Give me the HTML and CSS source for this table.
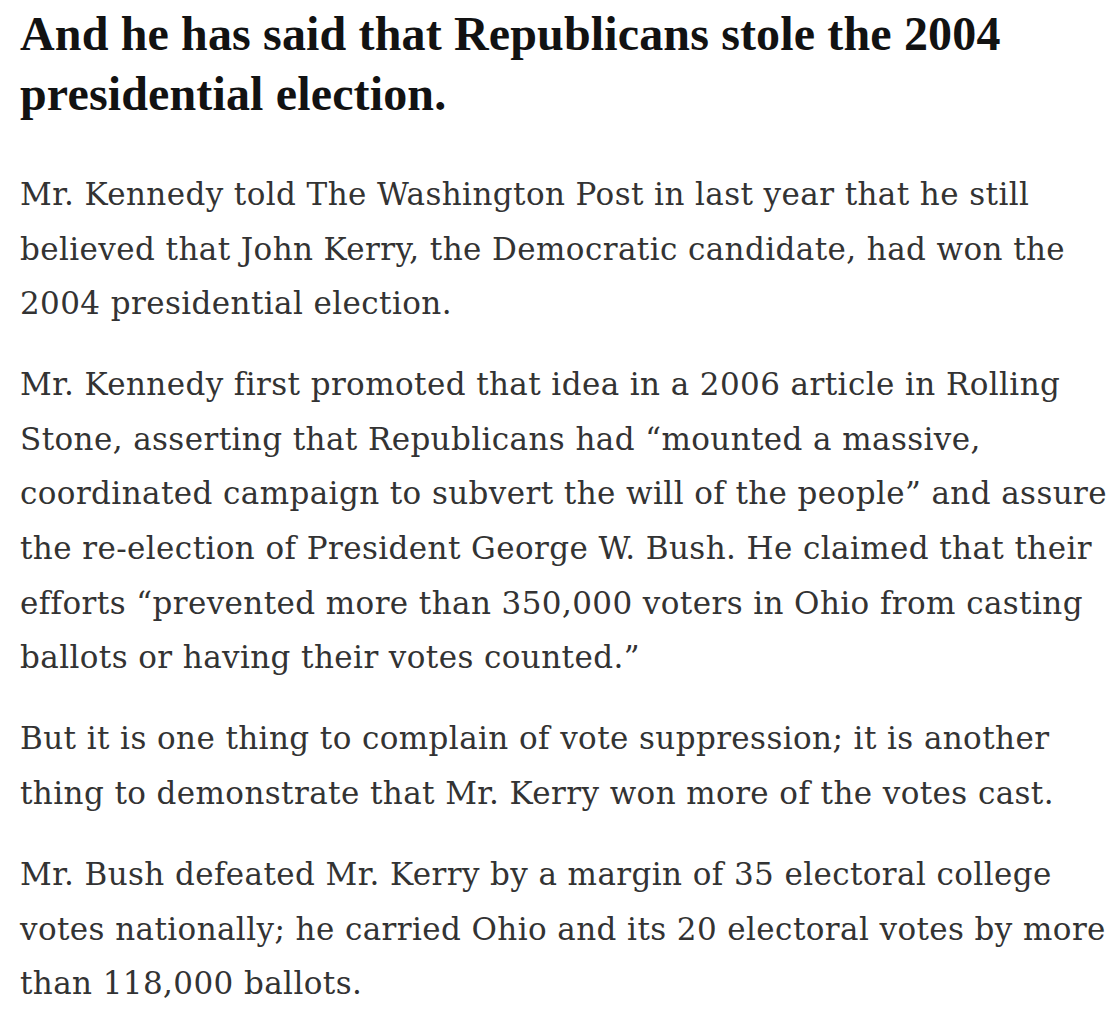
FILE: index.html
```html
<!DOCTYPE html>
<html lang="en">
<head>
<meta charset="utf-8">
<title>Article</title>
<link rel="stylesheet" href="styles.css">
</head>
<body>
<article class="story">
  <h2 class="story-heading">And he has said that Republicans stole the 2004<br>presidential election.</h2>
  <p class="story-text">Mr. Kennedy told The Washington Post in last year that he still<br>believed that John Kerry, the Democratic candidate, had won the<br>2004 presidential election.</p>
  <p class="story-text">Mr. Kennedy first promoted that idea in a 2006 article in Rolling<br>Stone, asserting that Republicans had “mounted a massive,<br>coordinated campaign to subvert the will of the people” and assure<br>the re-election of President George W. Bush. He claimed that their<br>efforts “prevented more than 350,000 voters in Ohio from casting<br>ballots or having their votes counted.”</p>
  <p class="story-text">But it is one thing to complain of vote suppression; it is another<br>thing to demonstrate that Mr. Kerry won more of the votes cast.</p>
  <p class="story-text">Mr. Bush defeated Mr. Kerry by a margin of 35 electoral college<br>votes nationally; he carried Ohio and its 20 electoral votes by more<br>than 118,000 ballots.</p>
</article>
</body>
</html>
```
FILE: styles.css
```css
html, body {
  margin: 0;
  padding: 0;
  background: #ffffff;
}

.story {
  padding: 4px 0 0 20px;
}

.story-heading {
  margin: 0 0 43px 0;
  font-family: "Liberation Serif", "Times New Roman", serif;
  font-weight: 700;
  font-size: 48px;
  line-height: 60px;
  letter-spacing: 0.15px;
  color: #121212;
  white-space: nowrap;
}

.story-text {
  margin: 0 0 26.5px 0;
  font-family: "DejaVu Serif", Georgia, serif;
  font-size: 31px;
  line-height: 54.6px;
  letter-spacing: 0.4px;
  color: #333333;
  white-space: nowrap;
}
```
